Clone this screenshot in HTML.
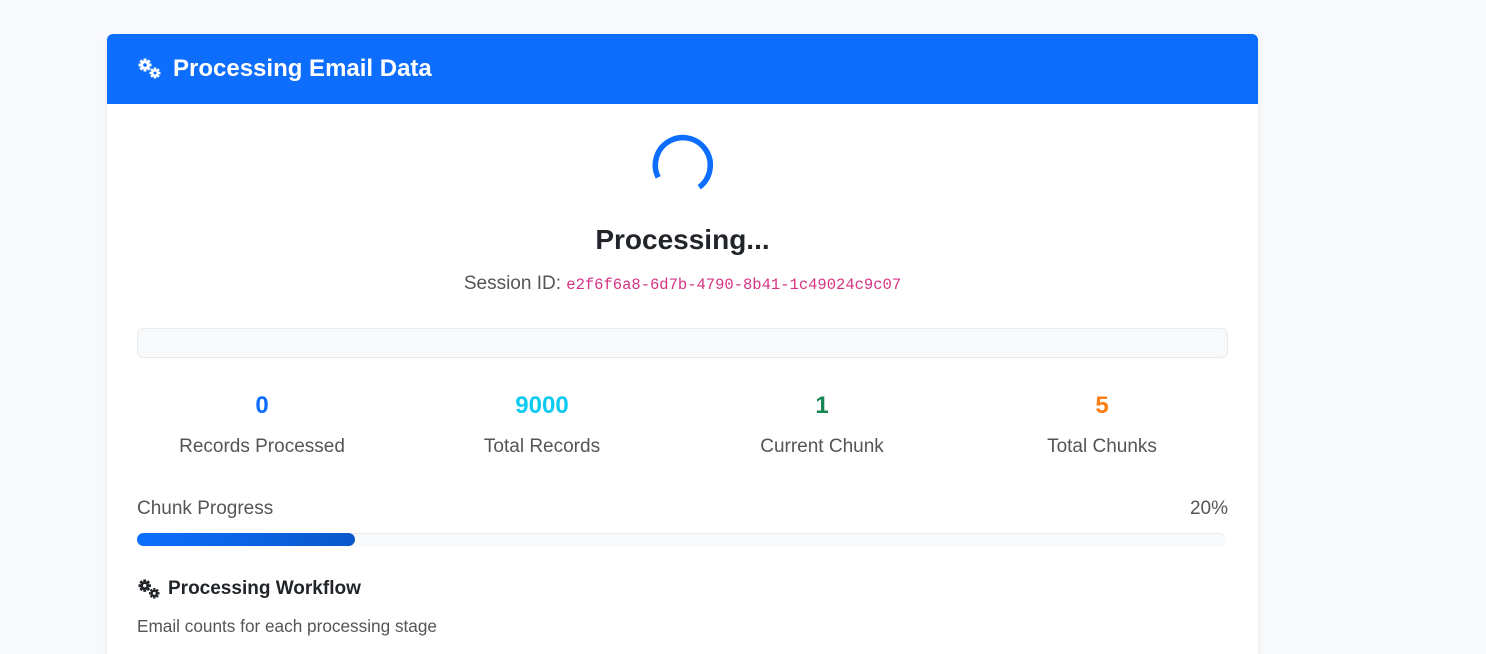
<!DOCTYPE html>
<html style="height:654px;overflow:hidden"><head><style>
body{margin:0;background:#f8f9fa;font-family:"Liberation Sans",sans-serif;width:1486px;height:654px;overflow:hidden;position:relative}
.card{position:absolute;left:107px;top:34px;width:1151px;height:640px;background:#fff;border-radius:6px;box-shadow:0 2px 6px rgba(0,0,0,.06);overflow:hidden}
.hdr{height:70px;background:#0d6efd;color:#fff;display:flex;align-items:center;padding-left:30px;font-size:24px;font-weight:bold}
.abs{position:absolute}
.c{text-align:center}
</style></head><body>
<div class="card">
<div class="hdr"><svg width="26" height="22" viewBox="0 0 26 22" style="margin-right:10px"><g fill="#fff"><circle cx="8" cy="7" r="4.5"/><g stroke="#fff" stroke-width="3"><line x1="8" y1="0.5" x2="8" y2="13.5"/><line x1="1.5" y1="7" x2="14.5" y2="7"/><line x1="3.4" y1="2.4" x2="12.6" y2="11.6"/><line x1="3.4" y1="11.6" x2="12.6" y2="2.4"/></g><circle cx="18" cy="15" r="3.8"/><g stroke="#fff" stroke-width="2.5"><line x1="18" y1="9.5" x2="18" y2="20.5"/><line x1="12.5" y1="15" x2="23.5" y2="15"/><line x1="14.1" y1="11.1" x2="21.9" y2="18.9"/><line x1="14.1" y1="18.9" x2="21.9" y2="11.1"/></g></g><circle cx="8" cy="7" r="1.8" fill="#0d6efd"/><circle cx="18" cy="15" r="1.5" fill="#0d6efd"/></svg>Processing Email Data</div>
<svg class="abs" style="left:536px;top:91px" width="80" height="80" viewBox="0 0 80 80"><path d="M 15.2 52.4 A 27.5 27.5 0 1 1 56.2 62.2" fill="none" stroke="#0d6efd" stroke-width="5.5"/></svg>
<div class="abs c" style="left:0;width:1151px;top:190px;font-size:28px;font-weight:bold;color:#212529">Processing...</div>
<div class="abs c" style="left:0;width:1151px;top:239px;font-size:19px;color:#555">Session ID: <span style="font-family:'Liberation Mono',monospace;font-size:15.5px;color:#d63384">e2f6f6a8-6d7b-4790-8b41-1c49024c9c07</span></div>
<div class="abs" style="left:30px;top:294px;width:1089px;height:28px;background:#f8f9fa;border:1px solid #e9ecef;border-radius:6px"></div>
<div class="abs c" style="left:15px;width:280px;top:358px;font-size:24px;font-weight:bold;color:#0d6efd">0</div>
<div class="abs c" style="left:295px;width:280px;top:358px;font-size:24px;font-weight:bold;color:#0dcaf0">9000</div>
<div class="abs c" style="left:575px;width:280px;top:358px;font-size:24px;font-weight:bold;color:#198754">1</div>
<div class="abs c" style="left:855px;width:280px;top:358px;font-size:24px;font-weight:bold;color:#fd7e14">5</div>
<div class="abs c" style="left:15px;width:280px;top:402px;font-size:19px;color:#555">Records Processed</div>
<div class="abs c" style="left:295px;width:280px;top:402px;font-size:19px;color:#555">Total Records</div>
<div class="abs c" style="left:575px;width:280px;top:402px;font-size:19px;color:#555">Current Chunk</div>
<div class="abs c" style="left:855px;width:280px;top:402px;font-size:19px;color:#555">Total Chunks</div>
<div class="abs" style="left:30px;top:464px;font-size:19px;color:#555">Chunk Progress</div>
<div class="abs" style="right:30px;top:464px;font-size:19px;color:#555">20%</div>
<div class="abs" style="left:30px;top:499px;width:1089px;height:13px;background:#f8f9fa;border-top:1px solid #e9ecef;border-radius:7px"></div>
<div class="abs" style="left:30px;top:499px;width:218px;height:13px;background:linear-gradient(90deg,#0d6efd,#0a58ca);border-radius:7px"></div>
<div class="abs" style="left:30px;top:544px;font-size:19px;font-weight:bold;color:#212529;display:flex;align-items:center"><svg width="25" height="21" viewBox="0 0 26 22" style="margin-right:6px"><g fill="#212529"><circle cx="8" cy="7" r="4.5"/><g stroke="#212529" stroke-width="3"><line x1="8" y1="0.5" x2="8" y2="13.5"/><line x1="1.5" y1="7" x2="14.5" y2="7"/><line x1="3.4" y1="2.4" x2="12.6" y2="11.6"/><line x1="3.4" y1="11.6" x2="12.6" y2="2.4"/></g><circle cx="18" cy="15" r="3.8"/><g stroke="#212529" stroke-width="2.5"><line x1="18" y1="9.5" x2="18" y2="20.5"/><line x1="12.5" y1="15" x2="23.5" y2="15"/><line x1="14.1" y1="11.1" x2="21.9" y2="18.9"/><line x1="14.1" y1="18.9" x2="21.9" y2="11.1"/></g></g><circle cx="8" cy="7" r="1.8" fill="#fff"/><circle cx="18" cy="15" r="1.5" fill="#fff"/></svg>Processing Workflow</div>
<div class="abs" style="left:30px;top:582px;font-size:17.2px;color:#555">Email counts for each processing stage</div>
</div>
</body></html>
